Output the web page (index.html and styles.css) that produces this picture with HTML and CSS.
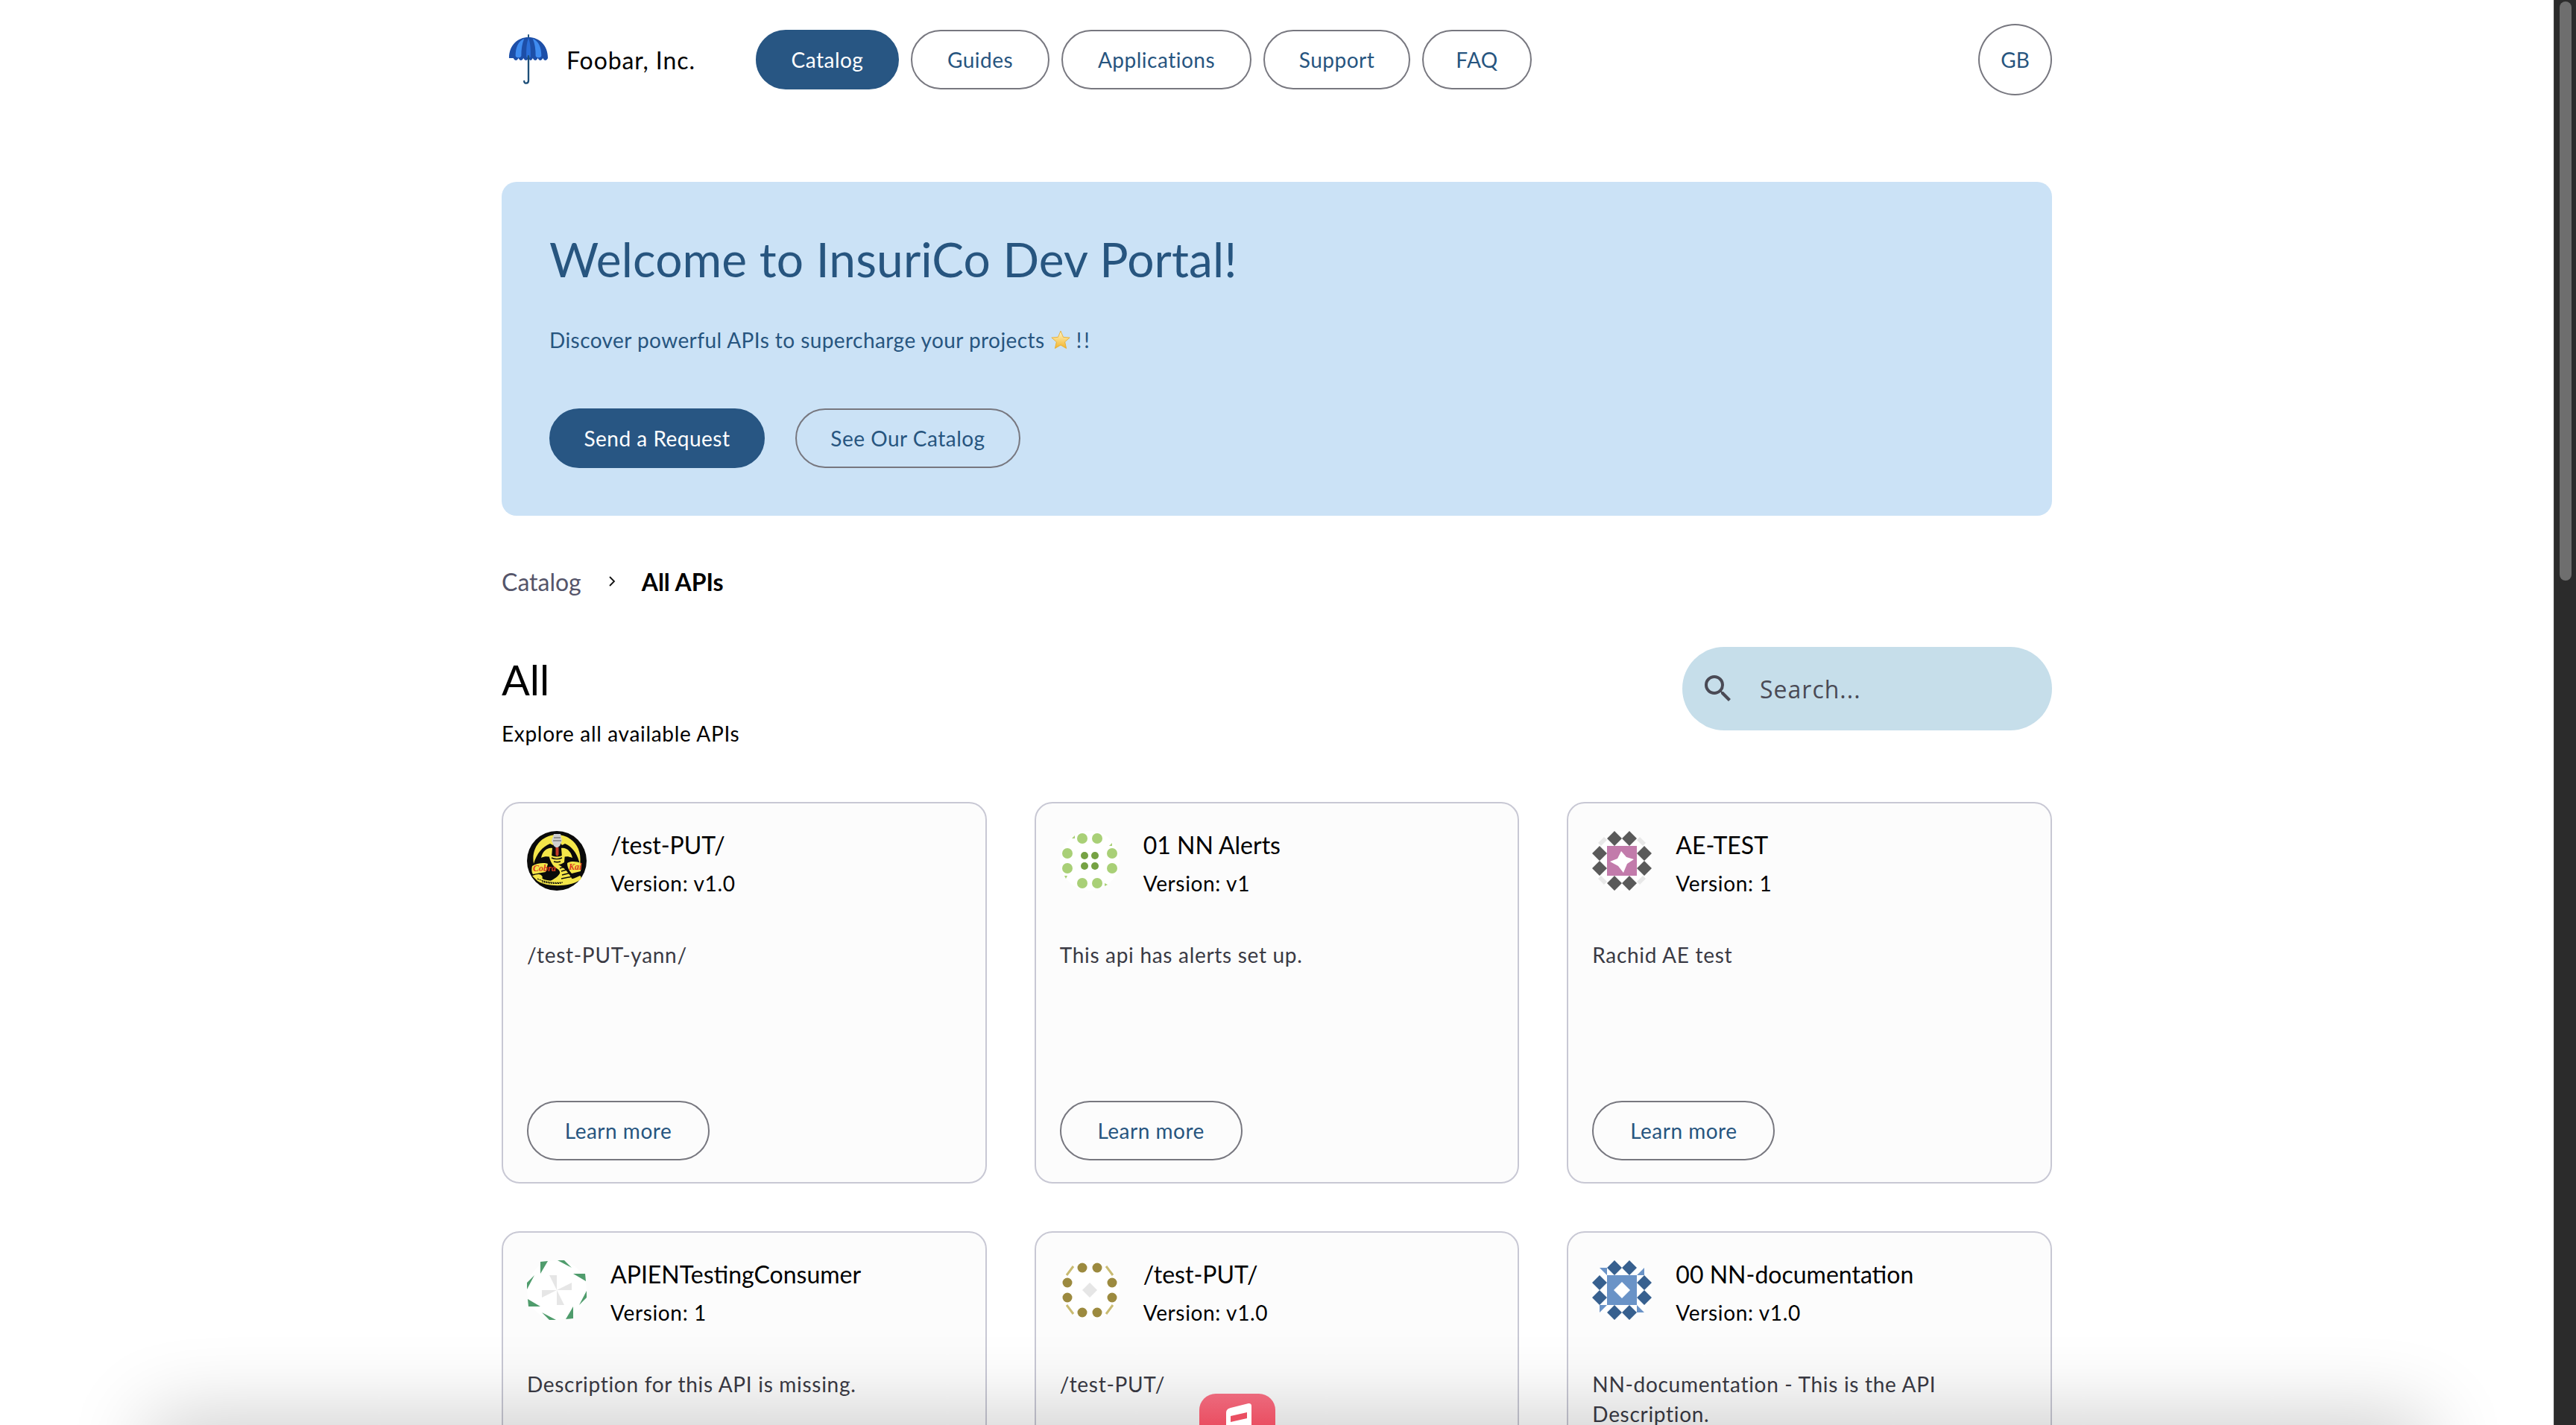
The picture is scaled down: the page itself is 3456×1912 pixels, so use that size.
FILE: index.html
```html
<!DOCTYPE html>
<html lang="en">
<head>
<meta charset="utf-8">
<title>Foobar, Inc.</title>
<link rel="stylesheet" href="styles.css">
</head>
<body>
<div class="viewport">
  <div class="page">
    <header class="topbar">
      <a class="brand">
        <svg class="brand-logo" viewBox="0 0 56 70"><path d="M28 0v4" stroke="#1d4f78" stroke-width="2"/><path d="M1 33C1 15 13 4 28 4s27 11 27 29c-2 4-5 4-7 0-2 4-5 4-7 0-2 4-5 4-7 0-2 4-4 4-6 0-2 4-5 4-7 0-2 4-5 4-7 0-2 4-5 4-7 0z" fill="#1d4fa8"/><path d="M10 30C10 18 14 9 22 6c-3 7-4 15-4 24-2 3-6 3-8 0zM34 6c8 3 12 12 12 24-2 3-6 3-8 0 0-9-1-17-4-24z" fill="#3f8cf0"/><path d="M25 31c0-10 0-18 3-26 3 8 3 16 3 26-2 2-4 2-6 0z" fill="#2b6fd8"/><path d="M28 30v34c0 5-6 5-6 1" fill="none" stroke="#1d4f78" stroke-width="2.4" stroke-linecap="round"/></svg>
        <span>Foobar, Inc.</span>
      </a>
      <nav class="nav">
        <a class="pill pill-solid w-catalog">Catalog</a>
        <a class="pill w-guides">Guides</a>
        <a class="pill w-apps">Applications</a>
        <a class="pill w-support">Support</a>
        <a class="pill w-faq">FAQ</a>
      </nav>
      <a class="avatar">GB</a>
    </header>

    <section class="hero">
      <h1>Welcome to InsuriCo Dev Portal!</h1>
      <p>Discover powerful APIs to supercharge your projects
        <svg class="star" viewBox="0 0 24 24"><defs><linearGradient id="sg" x1="0" y1="0" x2="0" y2="1"><stop offset="0" stop-color="#fff6c8"/><stop offset="1" stop-color="#f3b52c"/></linearGradient></defs><path d="M12 1l3.2 7.6 8 .7-6 5.3 1.8 8L12 18.4 5 22.6l1.8-8-6-5.3 8-.7z" fill="url(#sg)" stroke="#e9ab2b" stroke-width=".8"/></svg>
        <span class="bangs">!!</span></p>
      <div class="hero-actions">
        <a class="pill pill-solid w-send">Send a Request</a>
        <a class="pill w-see">See Our Catalog</a>
      </div>
    </section>

    <div class="crumbs">
      <a>Catalog</a>
      <svg class="chev" viewBox="0 0 12 16"><path d="M3 2l6 6-6 6" fill="none" stroke="#111" stroke-width="1.8"/></svg>
      <strong>All APIs</strong>
    </div>

    <div class="section-head">
      <div>
        <h2>All</h2>
        <p>Explore all available APIs</p>
      </div>
      <label class="search">
        <svg viewBox="0 0 24 24"><path d="M15.5 14h-.79l-.28-.27A6.47 6.47 0 0 0 16 9.5 6.5 6.5 0 1 0 9.5 16c1.61 0 3.09-.59 4.23-1.57l.27.28v.79l5 4.99L20.49 19l-4.99-5zm-6 0C7.01 14 5 11.99 5 9.5S7.01 5 9.5 5 14 7.01 14 9.5 11.99 14 9.5 14z" fill="#4a4a55"/></svg>
        <span>Search...</span>
      </label>
    </div>

    <div class="cards">
      <article class="card">
        <div class="card-head">
          <svg class="api-icon" viewBox="0 0 80 80"><circle cx="40" cy="40" r="40" fill="#0a0a0a"/><path d="M9 44C5 20 22 5 40 5c18 0 35 15 31 40-3-14-10-24-20-28l-4 2-6-8-6 8-4-2C21 21 13 30 9 44z" fill="#f4e64a"/><path d="M19 36c2-9 8-14 15-13l-1 12c-6-1-10-1-14 1zM61 36c-2-9-8-14-15-13l1 12c6-1 10-1 14 1z" fill="#f4e64a"/><path d="M29 30c6 6 16 6 22 0l-1 12c-3 2-5 3-8 3 8 4 15 12 20 22-10 5-24 5-32 1 5-3 11-6 14-11 1-3-2-6-6-8-5-4-8-11-9-19z" fill="#f4e64a"/><path d="M36 4h9l2 9-3 7-4 3-4-3-3-7z" fill="#cfcfcf"/><path d="M36 9h9M35 13h11" stroke="#555" stroke-width="1.2"/><path d="M38.5 22h4v10l-2 2-2-2z" fill="#c43a28"/><path d="M33 36c4 2 10 2 14 0M36 41c3 1 6 1 9 0M44 50l10-3M46 54l11-3M47 59l12-3M46 64l15-3" fill="none" stroke="#0a0a0a" stroke-width="1.4"/><path d="M7 60c8-3 12-3 14 2-6 4 28 10 50-2 2 1 2 3 1 5-12 10-44 11-58 2z" fill="#f4e64a"/><path d="M14 64c10 5 24 6 34 5M20 68c8 2 18 3 26 2" fill="none" stroke="#0a0a0a" stroke-width="1.2" stroke-dasharray="2 1"/><path d="M7 47c6-4 16-5 21-3l-3 11-17 3c-2-3-2-7-1-11zM54 43c6-3 12-2 19 0l-1 11-12 3c-4-4-6-9-6-14z" fill="#f4e64a"/><text class="cobra" x="8" y="54">Cobra</text><text class="cobra" x="56" y="52">Kai</text></svg>
          <div>
            <h3>/test-PUT/</h3>
            <p class="ver">Version: v1.0</p>
          </div>
        </div>
        <p class="desc">/test-PUT-yann/</p>
        <a class="pill learn">Learn more</a>
      </article>

      <article class="card">
        <div class="card-head">
          <svg class="api-icon" viewBox="0 0 80 80"><circle cx="40" cy="40" r="40" fill="#fff"/><g fill="#a9d077"><circle cx="30" cy="10" r="7"/><circle cx="50" cy="10" r="7"/><circle cx="10" cy="30" r="7"/><circle cx="70" cy="30" r="7"/><circle cx="10" cy="50" r="7"/><circle cx="70" cy="50" r="7"/><circle cx="30" cy="70" r="7"/><circle cx="50" cy="70" r="7"/><path d="M20 6v4h-4zM70 16v4h-4zM6 60h4l-2 4zM60 70l4 2-4 2z"/></g><g fill="#76a244"><circle cx="33" cy="33" r="5"/><circle cx="47" cy="33" r="5"/><circle cx="33" cy="47" r="5"/><circle cx="47" cy="47" r="5"/></g></svg>
          <div>
            <h3>01 NN Alerts</h3>
            <p class="ver">Version: v1</p>
          </div>
        </div>
        <p class="desc">This api has alerts set up.</p>
        <a class="pill learn">Learn more</a>
      </article>

      <article class="card">
        <div class="card-head">
          <svg class="api-icon" viewBox="0 0 80 80"><circle cx="40" cy="40" r="40" fill="#fff"/><g fill="#e8e8e8"><path d="M8 16l8-8 4 4-8 8zM64 8l8 8-4 4-8-8zM8 64l4-4 8 8-4 4zM72 64l-8 8-4-4 8-8z"/></g><rect x="20" y="20" width="40" height="40" fill="#c27bab"/><g fill="#5a5a5a"><path d="M30 0l10 10-10 10-10-10zM50 0l10 10-10 10-10-10zM10 20l10 10-10 10L0 30zM70 20l10 10-10 10-10-10zM10 40l10 10-10 10L0 50zM70 40l10 10-10 10-10-10zM30 60l10 10-10 10-10-10zM50 60l10 10-10 10-10-10z"/></g><path d="M39 27l7 8 10 3-9 6-5 12-7-9-11-6 10-4z" fill="#fff"/></svg>
          <div>
            <h3>AE-TEST</h3>
            <p class="ver">Version: 1</p>
          </div>
        </div>
        <p class="desc">Rachid AE test</p>
        <a class="pill learn">Learn more</a>
      </article>

      <article class="card">
        <div class="card-head">
          <svg class="api-icon" viewBox="0 0 80 80"><circle cx="40" cy="40" r="40" fill="#fff"/><g fill="#4f9c6c"><path d="M41 0h9l10 10zM80 41v9L70 60zM39 80h-9L20 70zM0 39v-9l10-10zM62 18h16l1 10zM62 62v16l-10 1zM18 62H2L1 52zM18 18V2l10-1z"/></g><g fill="#e6e6e6"><path d="M30 20h10v20zM60 30v10H40zM50 60H40V40zM20 50V40h20z"/></g></svg>
          <div>
            <h3>APIENTestingConsumer</h3>
            <p class="ver">Version: 1</p>
          </div>
        </div>
        <p class="desc">Description for this API is missing.</p>
      </article>

      <article class="card">
        <div class="card-head">
          <svg class="api-icon" viewBox="0 0 80 80"><circle cx="40" cy="40" r="40" fill="#fff"/><g fill="#9c8a3f"><circle cx="30" cy="10" r="6.5"/><circle cx="50" cy="10" r="6.5"/><circle cx="10" cy="30" r="6.5"/><circle cx="70" cy="30" r="6.5"/><circle cx="10" cy="50" r="6.5"/><circle cx="70" cy="50" r="6.5"/><circle cx="30" cy="70" r="6.5"/><circle cx="50" cy="70" r="6.5"/></g><g fill="none" stroke="#c9bb72" stroke-width="3"><path d="M18 8L9 20M62 8l9 12M9 60l9 12M71 60l-9 12"/></g><path d="M40 30l10 10-10 10-10-10z" fill="#e6e6e6"/></svg>
          <div>
            <h3>/test-PUT/</h3>
            <p class="ver">Version: v1.0</p>
          </div>
        </div>
        <p class="desc">/test-PUT/</p>
      </article>

      <article class="card">
        <div class="card-head">
          <svg class="api-icon" viewBox="0 0 80 80"><circle cx="40" cy="40" r="40" fill="#fff"/><rect x="20" y="20" width="40" height="40" fill="#6a93c7"/><g fill="#6a93c7"><path d="M10 10h10v10zM70 10v10H60zM10 70V60h10zM70 70H60V60z"/></g><g fill="#37608f"><path d="M30 0l10 10-10 10-10-10zM50 0l10 10-10 10-10-10zM10 20l10 10-10 10L0 30zM70 20l10 10-10 10-10-10zM10 40l10 10-10 10L0 50zM70 40l10 10-10 10-10-10zM30 60l10 10-10 10-10-10zM50 60l10 10-10 10-10-10z"/></g><path d="M40 29l11 11-11 11-11-11z" fill="#fff"/></svg>
          <div>
            <h3>00 NN-documentation</h3>
            <p class="ver">Version: v1.0</p>
          </div>
        </div>
        <p class="desc">NN-documentation - This is the API Description.</p>
      </article>
    </div>
  </div>
  <aside class="scrollbar"><div class="thumb"></div></aside>
  <div class="dock-shadow"></div>
  <div class="dock-app">
    <svg viewBox="0 0 102 42"><path d="M36 26c0-4 2-6 6-7l24-6c3 0 4 1 4 4v25H36z" fill="#fff"/><path d="M42 30l22-5v8l-22 5z" fill="#ea4f62"/></svg>
  </div>
</div>
</body>
</html>
```
FILE: styles.css
```css
* { box-sizing: border-box; }
html, body { margin: 0; height: 100%; overflow: hidden; }
body { background: #fff; color: #000; font-family: Lato, "Liberation Sans", sans-serif; }
h1, h2, h3, p { margin: 0; font-weight: 400; }

.viewport { position: relative; display: flex; height: 1912px; overflow: hidden; }
.page { flex: 1; min-width: 0; height: 1912px; overflow: hidden; display: flex; flex-direction: column; align-items: center; }
.page > * { width: 2080px; flex: none; }

.topbar { display: flex; align-items: center; height: 160px; }
.brand { display: flex; align-items: center; gap: 24px; font-size: 32px; letter-spacing: .9px; width: 341px; padding-left: 9px; }
.brand-logo { width: 54px; height: 68px; }
.nav { display: flex; gap: 16px; flex: 1; }
.pill { display: inline-flex; align-items: center; justify-content: center; height: 80px; border: 2px solid #77777f; border-radius: 40px; color: #27557f; font-size: 28px; letter-spacing: .5px; white-space: nowrap; }
.pill-solid { background: #285683; border-color: #285683; color: #fff; }
.w-catalog { width: 192px; }
.w-guides { width: 186px; }
.w-apps { width: 255px; }
.w-support { width: 197px; }
.w-faq { width: 147px; }
.w-send { width: 289px; }
.w-see { width: 302px; }
.avatar { display: flex; align-items: center; justify-content: center; width: 99px; height: 96px; border: 2px solid #77777f; border-radius: 50%; color: #27557f; font-size: 28px; }

.hero { margin-top: 84px; height: 448px; padding: 64px; background: #cbe2f6; border-radius: 20px; color: #27557f; }
.hero h1 { font-size: 64px; line-height: 80px; letter-spacing: .15px; }
.hero p { margin-top: 48px; font-size: 28px; line-height: 40px; letter-spacing: .43px; display: flex; align-items: center; gap: 8px; }
.star { width: 26px; height: 26px; }
.bangs { letter-spacing: 3px; }
.hero-actions { display: flex; gap: 41px; margin-top: 72px; }

.crumbs { margin-top: 68px; height: 40px; display: flex; align-items: center; font-size: 32px; }
.crumbs a { color: #55556a; }
.chev { width: 12px; height: 16px; margin: 0 34px 0 35px; }
.crumbs strong { font-weight: 700; }

.section-head { margin-top: 68px; height: 112px; display: flex; justify-content: space-between; align-items: flex-start; }
.section-head h2 { font-size: 56px; line-height: 88px; }
.section-head p { margin-top: 8px; font-size: 28px; line-height: 40px; letter-spacing: .68px; }
.search { display: flex; align-items: center; width: 496px; height: 112px; padding-left: 24px; background: #c6deea; border-radius: 56px; color: #4a4a55; font-size: 32px; font-family: "Open Sans", sans-serif; letter-spacing: 1px; }
.search svg { width: 48px; height: 48px; margin-right: 32px; flex: none; }

.cards { margin-top: 96px; display: grid; grid-template-columns: repeat(3, 1fr); gap: 64px; }
.card { height: 512px; display: flex; flex-direction: column; padding: 32px 32px 29px; background: #fcfcfc; border: 2px solid #c8c8d4; border-radius: 24px; }
.card-head { display: flex; gap: 32px; align-items: flex-start; }
.api-icon { width: 80px; height: 80px; margin-top: 5px; flex: none; }
.card h3 { font-size: 32px; line-height: 48px; }
.ver { font-size: 28px; line-height: 54px; letter-spacing: .65px; }
.desc { margin-top: 49px; font-size: 28px; line-height: 40px; letter-spacing: .7px; color: #3a3a44; }
.learn { margin-top: auto; align-self: flex-start; width: 245px; }
.cobra { font-size: 12px; font-style: italic; font-weight: 700; fill: #dd3a20; font-family: "Liberation Serif", serif; }

.scrollbar { flex: none; width: 30px; height: 1912px; background: #2b2b2b; border-left: 1px solid #3f3f3f; padding: 2px 6px 0 7px; }
.thumb { width: 16px; height: 777px; background: #6e6e6e; border-radius: 8px; }

.dock-shadow { position: absolute; left: 240px; right: 240px; top: 1940px; height: 40px; box-shadow: 0 0 110px 40px rgba(0,0,0,.2); pointer-events: none; }
.dock-app { position: absolute; left: 1609px; top: 1870px; width: 102px; height: 42px; border-radius: 22px 22px 0 0; background: linear-gradient(#ec6a7d, #ea4f62); overflow: hidden; }
.dock-app svg { display: block; width: 102px; height: 42px; }
```
